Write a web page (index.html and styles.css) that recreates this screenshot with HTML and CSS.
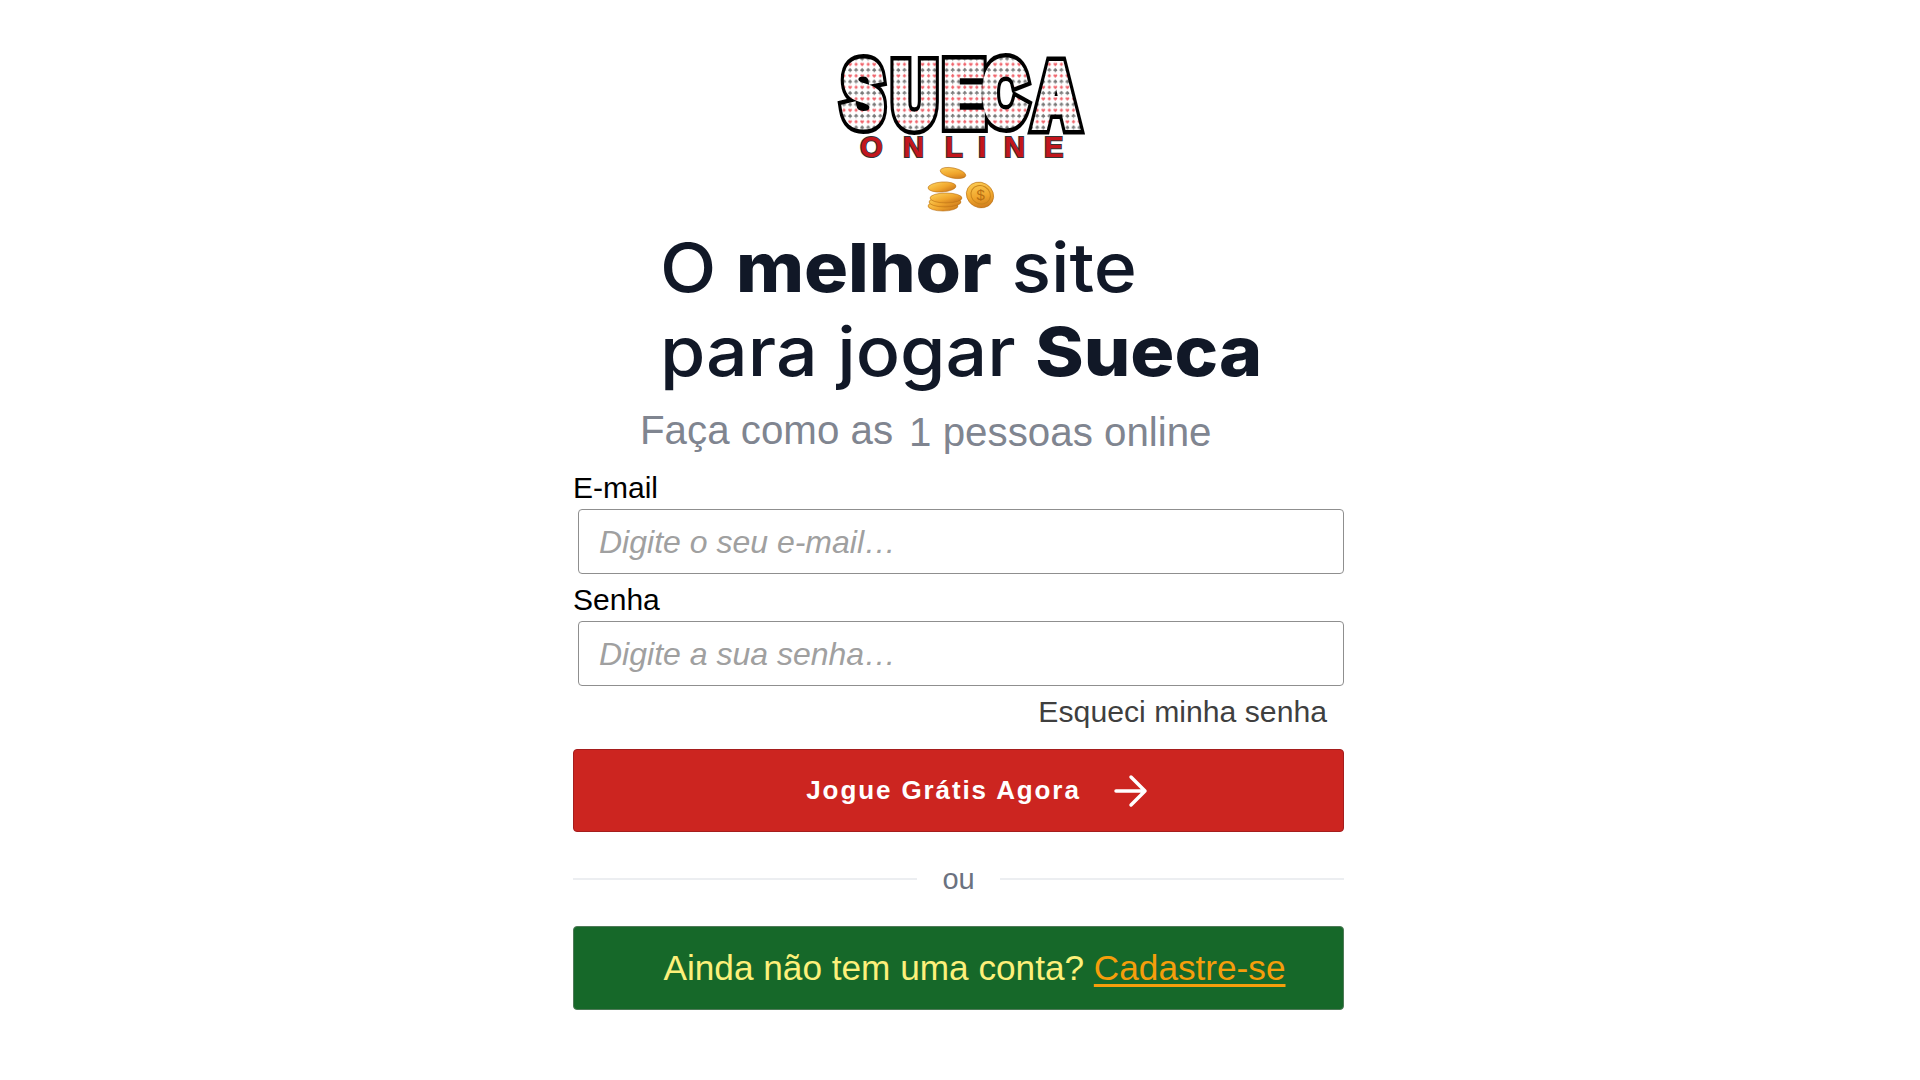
FILE: index.html
```html
<!DOCTYPE html>
<html lang="pt">
<head>
<meta charset="utf-8">
<title>Sueca Online</title>
<link rel="stylesheet" href="styles.css">
</head>
<body>
<main class="page">
  <svg class="logo" viewBox="0 0 255 165" width="255" height="165" xmlns="http://www.w3.org/2000/svg" role="img" aria-label="Sueca Online">
    <defs>
      <pattern id="suits" width="14" height="14" patternUnits="userSpaceOnUse" patternTransform="scale(1.25 .82)">
        <rect width="14" height="14" fill="#fff"/>
        <path d="M3.500 2.200c.7-1 2.200-.5 2.200.7 0 1.200-1.400 2-2.200 3-.8-1-2.200-1.800-2.200-3 0-1.200 1.500-1.700 2.200-.7z" fill="#f0646c"/>
        <path d="M10.500 1l2.100 2.400-2.100 2.400-2.100-2.400z" fill="#f0646c"/>
        <path d="M3.500 8c1.100 1.200 2.200 1.900 2.200 3 0 .9-1.100 1.200-1.800.6l.3 1.400H2.800l.3-1.400c-.7.6-1.800.3-1.800-.6 0-1.100 1.100-1.800 2.200-3z" fill="#777"/>
        <path d="M10.500 8c.9 0 1.400.9 1 1.600.9-.2 1.500.5 1.300 1.200-.2.800-1.200 1-1.900.4l.2 1.800H9.900l.2-1.800c-.7.600-1.700.4-1.900-.4-.2-.7.400-1.400 1.300-1.200-.4-.7.1-1.600 1-1.600z" fill="#777"/>
      </pattern>
      <linearGradient id="coin" x1="0" y1="0" x2="1" y2="1">
        <stop offset="0" stop-color="#ffd75e"/>
        <stop offset=".55" stop-color="#f0a52c"/>
        <stop offset="1" stop-color="#c06a18"/>
      </linearGradient>
      <text id="word" transform="scale(.69 1)" x="12 84 158 214 289" y="74 75 74 73 75">SUECA</text>
    </defs>
    <use class="word-outline" href="#word"/>
    <use class="word-fill" href="#word"/>
    <text class="logo-online" x="25 68 110 143 169 209" y="107">ONLINE</text>
    <g class="coins">
      <ellipse cx="118" cy="123" rx="13" ry="5" transform="rotate(12 118 123)"/>
      <ellipse cx="108" cy="156" rx="15" ry="5"/>
      <ellipse cx="110" cy="152" rx="16" ry="5"/>
      <ellipse cx="111" cy="148" rx="16" ry="5"/>
      <ellipse cx="107" cy="137" rx="14" ry="5" transform="rotate(-4 107 137)"/>
      <ellipse cx="145" cy="145" rx="14" ry="12.500" transform="rotate(30 145 145)"/>
      <ellipse class="coin-rim" cx="145.500" cy="144.500" rx="10" ry="9" transform="rotate(30 145 145)"/>
    </g>
    <text class="coin-sign" x="141.500" y="150">$</text>
  </svg>

  <h1 class="headline">O <strong>melhor</strong> site<br>para jogar <strong>Sueca</strong></h1>
  <p class="subtitle"><span>Faça como as</span><span class="count">1 pessoas online</span></p>

  <form class="form">
    <label class="label" for="email">E-mail</label>
    <input class="input" id="email" type="email" placeholder="Digite o seu e-mail…">
    <label class="label" for="senha">Senha</label>
    <input class="input" id="senha" type="password" placeholder="Digite a sua senha…">
    <a class="forgot" href="#">Esqueci minha senha</a>
    <button class="play" type="button">
      <span>Jogue Grátis Agora</span>
      <svg class="arrow" viewBox="0 0 34 34" width="34" height="34" fill="none" stroke="#fff" stroke-width="3.500" stroke-linecap="round" stroke-linejoin="round"><path d="M2 17h29M17 3l14 14-14 14"/></svg>
    </button>
    <div class="divider"><span>ou</span></div>
    <div class="signup"><span>Ainda não tem uma conta? <a href="#">Cadastre-se</a></span></div>
  </form>
</main>
</body>
</html>
```

FILE: styles.css
```css
* { box-sizing: border-box; }
html, body { margin: 0; padding: 0; background: #fff; }
body { font-family: "Liberation Sans", Arial, sans-serif; color: #000; }
.page { width: 771px; margin: 0 0 0 573px; padding-top: 50px; display: flex; flex-direction: column; }
.logo { display: block; margin-left: 262px; margin-bottom: -5px; overflow: visible; }
.logo text, .logo use { font-family: "Liberation Sans", sans-serif; font-weight: 700; }
.logo use { font-size: 87px; stroke-linejoin: miter; stroke-miterlimit: 2; }
.word-outline { fill: #000; stroke: #000; stroke-width: 18px; }
.word-fill { fill: url(#suits); stroke: url(#suits); stroke-width: 9px; }
.logo-online { font-size: 29px; fill: #c3161c; stroke: #333; stroke-width: 2px; paint-order: stroke; }
.coins { fill: url(#coin); stroke: #b96f12; stroke-width: .6; }
.coin-rim { fill: none; stroke: #c9851d; stroke-width: 1; }
.logo .coin-sign { font-size: 15px; font-weight: 400; fill: #b96f12; }
.headline { margin: 15px 0 0 87px; font-family: Inter, "Liberation Sans", sans-serif; font-size: 68px; line-height: 84px; font-weight: 500; color: #111827; white-space: nowrap; transform: scaleX(1.08); transform-origin: left center; }
.headline strong { font-weight: 800; }
.subtitle { margin: 15px 0 0 67px; font-size: 40.3px; line-height: 46px; color: #808590; display: flex; gap: 16px; }
.count { position: relative; top: 2px; }
.form { display: flex; flex-direction: column; margin-top: 16px; }
.label { font-size: 30px; line-height: 36px; }
.input { margin: 3px 0 0 5px; height: 65px; width: 766px; border: 1px solid #8f8f8f; border-radius: 4px; padding: 2px 20px 0; font-family: inherit; font-size: 32px; background: #fff; }
.input::placeholder { font-style: italic; color: #a0a0a0; opacity: 1; }
.input + .label { margin-top: 8px; }
.forgot { align-self: flex-end; margin: 8px 17px 0 0; font-size: 30.2px; line-height: 36px; color: #3f3f3f; text-decoration: none; }
.play { margin-top: 19px; height: 83px; border: 1px solid #a51d1d; border-radius: 4px; background: #cc2520; color: #fff; font-family: inherit; font-weight: 700; font-size: 26px; letter-spacing: 1.9px; display: flex; align-items: center; justify-content: center; gap: 33px; padding: 0 0 0 37px; }
.arrow { display: block; }
.divider { margin-top: 30px; display: flex; align-items: center; gap: 25px; font-size: 29px; line-height: 34px; color: #6b7280; }
.divider::before, .divider::after { content: ""; flex: 1; height: 2px; background: #eceef1; }
.signup { margin-top: 30px; height: 84px; border-radius: 4px; background: #166829; border: 1px solid #4f7a58; display: flex; align-items: center; justify-content: center; padding-left: 32px; font-size: 35.2px; color: #fdf07a; }
.signup a { color: #f59e0b; text-decoration-thickness: 3px; text-underline-offset: 4px; }
```
